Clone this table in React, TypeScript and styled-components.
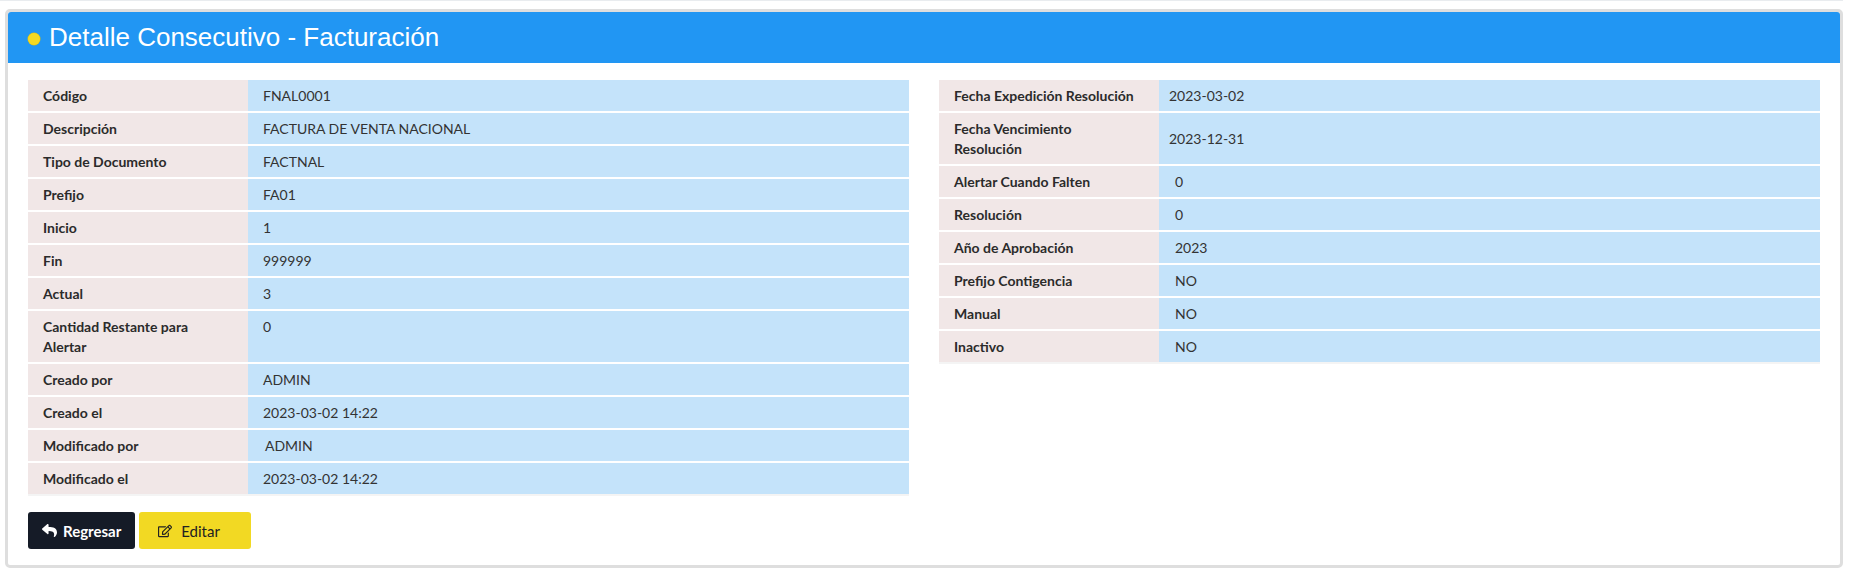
import { FaReply, FaRegEdit } from "react-icons/fa"
import styled, { createGlobalStyle } from "styled-components"

const GlobalStyle = createGlobalStyle`
  * {
    box-sizing: border-box;
  }

  body {
    margin: 0;
    background: #ffffff;
    font-family: Lato, "Open Sans", sans-serif;
    color: #333333;
  }
`

const Page = styled.div`
  width: 1843px;
  border-top: 1px solid #e9ecef;
  padding: 8px 0 8px 5px;
`

const Card = styled.section`
  border: 3px solid #dedede;
  border-radius: 5px;
  background: #ffffff;
`

const Header = styled.header`
  display: flex;
  align-items: center;
  gap: 9px;
  height: 51px;
  padding: 0 20px;
  background: #2196f3;
  border-radius: 3px 3px 0 0;
`

const Dot = styled.span`
  width: 12px;
  height: 12px;
  border-radius: 50%;
  background: #f4d922;
  box-shadow: 0 0 0 0.5px #d9bf10;
  margin-top: 2px;
`

const Title = styled.h1`
  margin: 0;
  font-family: "Liberation Sans", Arial, sans-serif;
  font-size: 26px;
  font-weight: 400;
  color: #ffffff;
`

const Body = styled.div`
  padding: 17px 20px 16px;
`

const Columns = styled.div`
  display: grid;
  grid-template-columns: 1fr 1fr;
  gap: 30px;
  align-items: start;
`

const Table = styled.div`
  display: flex;
  flex-direction: column;
  gap: 2px;
  border-bottom: 2px solid #f4f4f4;
`

const Row = styled.div<{ $align: "start" | "center" }>`
  display: grid;
  grid-template-columns: 220px 1fr;
  align-items: stretch;

  & > span {
    display: flex;
    align-items: ${({ $align }) => ($align === "center" ? "center" : "flex-start")};
  }
`

const Label = styled.span`
  padding: 5.5px 20px 5.5px 15px;
  background: #f1e7e7;
  font-size: 14px;
  line-height: 20px;
  font-weight: 700;
  color: #2b2b2b;
`

const Value = styled.span<{ $pad: number }>`
  padding: 5.5px 15px 5.5px ${({ $pad }) => $pad}px;
  background: #c4e3fa;
  font-size: 14px;
  line-height: 20px;
  color: #333333;
`

const Actions = styled.div`
  display: flex;
  gap: 4px;
  margin-top: 16px;
`

const Button = styled.button`
  display: flex;
  align-items: center;
  height: 37px;
  border: none;
  border-radius: 3px;
  font-family: Lato, "Open Sans", sans-serif;
  font-size: 15px;
  cursor: pointer;
`

const BackButton = styled(Button)`
  gap: 6px;
  padding: 0 14px;
  background: #151b27;
  color: #ffffff;
  font-weight: 700;

  svg {
    width: 15px;
    height: 15px;
  }
`

const EditButton = styled(Button)`
  gap: 9px;
  width: 112px;
  padding: 0 0 0 19px;
  background: #f2d923;
  color: #222222;

  svg {
    width: 14px;
    height: 14px;
  }
`

type Field = {
  label: string
  value: string
  pad?: number
}

const leftFields: Field[] = [
  { label: "Código", value: "FNAL0001" },
  { label: "Descripción", value: "FACTURA DE VENTA NACIONAL" },
  { label: "Tipo de Documento", value: "FACTNAL" },
  { label: "Prefijo", value: "FA01" },
  { label: "Inicio", value: "1" },
  { label: "Fin", value: "999999" },
  { label: "Actual", value: "3" },
  { label: "Cantidad Restante para Alertar", value: "0" },
  { label: "Creado por", value: "ADMIN" },
  { label: "Creado el", value: "2023-03-02 14:22" },
  { label: "Modificado por", value: "ADMIN", pad: 17 },
  { label: "Modificado el", value: "2023-03-02 14:22" },
]

const rightFields: Field[] = [
  { label: "Fecha Expedición Resolución", value: "2023-03-02", pad: 10 },
  { label: "Fecha Vencimiento Resolución", value: "2023-12-31", pad: 10 },
  { label: "Alertar Cuando Falten", value: "0" },
  { label: "Resolución", value: "0" },
  { label: "Año de Aprobación", value: "2023" },
  { label: "Prefijo Contigencia", value: "NO" },
  { label: "Manual", value: "NO" },
  { label: "Inactivo", value: "NO" },
]

function DetailTable({ fields, align, pad }: { fields: Field[]; align: "start" | "center"; pad: number }) {
  return (
    <Table>
      {fields.map((field) => (
        <Row key={field.label} $align={align}>
          <Label>{field.label}</Label>
          <Value $pad={field.pad ?? pad}>{field.value}</Value>
        </Row>
      ))}
    </Table>
  )
}

export default function App() {
  return (
    <>
      <GlobalStyle />
      <Page>
        <Card>
          <Header>
            <Dot />
            <Title>Detalle Consecutivo - Facturación</Title>
          </Header>

          <Body>
            <Columns>
              <DetailTable fields={leftFields} align="start" pad={15} />
              <DetailTable fields={rightFields} align="center" pad={16} />
            </Columns>

            <Actions>
              <BackButton>
                <FaReply />
                Regresar
              </BackButton>
              <EditButton>
                <FaRegEdit />
                Editar
              </EditButton>
            </Actions>
          </Body>
        </Card>
      </Page>
    </>
  )
}
